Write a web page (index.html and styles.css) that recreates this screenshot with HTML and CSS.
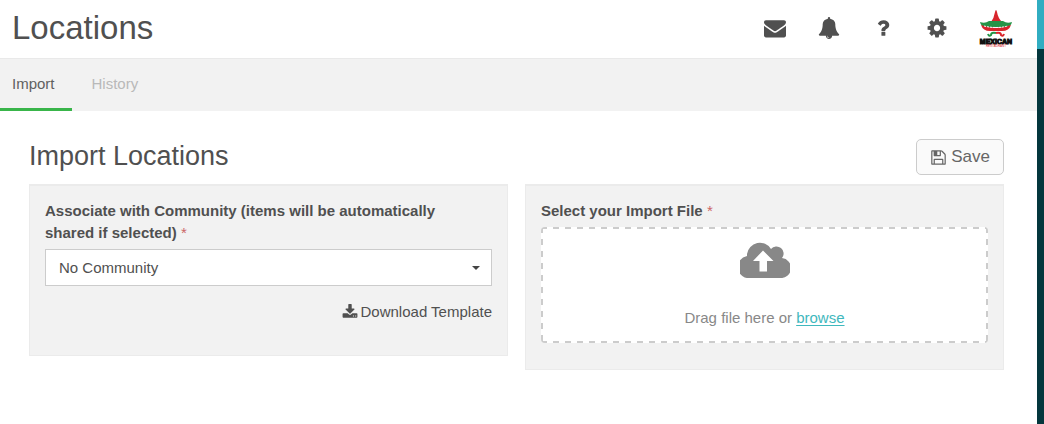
FILE: index.html
```html
<!DOCTYPE html>
<html lang="en">
  <head>
    <meta charset="UTF-8" />
    <meta name="viewport" content="width=device-width, initial-scale=1.0" />
    <title>Locations</title>
    <link rel="stylesheet" href="styles.css">
  </head>
  <body>
    <div class="page">
      <header class="topbar">
        <h1>Locations</h1>
        <nav class="topbar-nav">
          <a href="#" aria-label="Messages">
            <svg class="icon" viewBox="0 0 1792 1792"><path d="M1792 710v794q0 66-47 113t-113 47h-1472q-66 0-113-47t-47-113v-794q44 49 101 87 362 246 497 345 57 42 92.500 65.500t94.500 48 110 24.500h2q51 0 110-24.500t94.500-48 92.500-65.500q170-123 498-345 57-39 100-87zm0-294q0 79-49 151t-122 123q-376 261-468 325-10 7-42.500 30.500t-54 38-52 32.500-57.500 27-50 9h-2q-23 0-50-9t-57.500-27-52-32.500-54-38-42.500-30.500q-91-64-262-182.500t-205-142.500q-62-42-117-115.500t-55-136.500q0-78 41.500-130t118.500-52h1472q65 0 112.500 47t47.500 113z"/></svg>
          </a>
          <a href="#" aria-label="Notifications">
            <svg class="icon" viewBox="0 0 1792 1792"><path d="M912 1696q0-16-16-16-59 0-101.500-42.500t-42.500-101.500q0-16-16-16t-16 16q0 73 51.500 124.500t124.500 51.500q16 0 16-16zm816-288q0 52-38 90t-90 38h-448q0 106-75 181t-181 75-181-75-75-181h-448q-52 0-90-38t-38-90q50-42 91-88t85-119.500 74.500-158.500 50-206 19.500-260q0-152 117-282.500t307-158.500q-8-19-8-39 0-40 28-68t68-28 68 28 28 68q0 20-8 39 190 28 307 158.500t117 282.500q0 139 19.500 260t50 206 74.500 158.500 85 119.500 91 88z"/></svg>
          </a>
          <a href="#" aria-label="Help">
            <svg class="icon" viewBox="0 0 1792 1792"><path d="M1088 1256v240q0 16-12 28t-28 12h-240q-16 0-28-12t-12-28v-240q0-16 12-28t28-12h240q16 0 28 12t12 28zm316-600q0 54-15.500 101t-35 76.500-55 59.500-57.500 43.500-61 35.500q-41 23-68.500 65t-27.500 67q0 17-12 32.500t-28 15.500h-240q-15 0-25.500-18.500t-10.500-37.500v-45q0-83 65-156.500t143-108.500q59-27 84-56t25-76q0-42-46.500-74t-107.500-32q-65 0-108 29-35 25-107 115-13 16-31 16-12 0-25-8l-164-125q-13-10-15.500-25t5.500-28q160-266 464-266 80 0 161 31t146 83 106 127.500 41 158.500z"/></svg>
          </a>
          <a href="#" aria-label="Settings">
            <svg class="icon" viewBox="0 0 1792 1792"><path d="M1152 896q0-106-75-181t-181-75-181 75-75 181 75 181 181 75 181-75 75-181zm512-109v222q0 12-8 23t-20 13l-185 28q-19 54-39 91 35 50 107 138 10 12 10 25t-9 23q-27 37-99 108t-94 71q-12 0-26-9l-138-108q-44 23-91 38-16 136-29 186-7 28-36 28h-222q-14 0-24.500-8.500t-11.500-21.500l-28-184q-49-16-90-37l-141 107q-10 9-25 9-14 0-25-11-126-114-165-168-7-10-7-23 0-12 8-23 15-21 51-66.500t54-70.500q-27-50-41-99l-183-27q-13-2-21-12.500t-8-23.500v-222q0-12 8-23t19-13l186-28q14-46 39-92-40-57-107-138-10-12-10-24 0-10 9-23 26-36 98.500-107.500t94.500-71.500q13 0 26 10l138 107q44-23 91-38 16-136 29-186 7-28 36-28h222q14 0 24.500 8.500t11.500 21.500l28 184q49 16 90 37l142-107q9-9 24-9 13 0 25 10 129 119 165 170 7 8 7 22 0 12-8 23-15 21-51 66.500t-54 70.500q26 50 41 98l183 28q13 2 21 12.500t8 23.500z"/></svg>
          </a>
        </nav>
        <a href="#" class="account" aria-label="Mexican Restaurant">
          <svg class="logo" viewBox="0 0 40 40">
            <path fill="#d8252c" d="M14 14 Q17 10 18 4 Q19 0 20 4 Q21 10 25 14z"/>
            <path fill="#259447" d="M3 14 Q8 16 12 13 L26 13 Q30 16 35 14 Q34 19 29 19 H9 Q4 19 3 14z"/>
            <path fill="#d8252c" d="M4 17 Q12 20 19 20 T34 17 Q32 23 25 23 H13 Q6 23 4 17z"/>
            <path fill="none" stroke="#fff" stroke-dasharray="2 1" d="M7 18 Q19 21 31 18"/>
            <path fill="none" stroke="#259447" stroke-width="2" d="M19 25 Q14 24 14 27 Q12 29 11 26"/>
            <path fill="none" stroke="#d8252c" stroke-width="2" d="M19 25 Q24 24 24 27 Q26 29 27 26"/>
            <text class="logo-name" x="19" y="36" text-anchor="middle">MEXICAN</text>
            <text class="logo-sub" x="19" y="39" text-anchor="middle">RESTAURANT</text>
          </svg>
        </a>
      </header>

      <nav class="tabs">
        <a href="#" class="tab active">Import</a>
        <a href="#" class="tab">History</a>
      </nav>

      <main>
        <div class="heading">
          <h2>Import Locations</h2>
          <button type="button" class="save">
            <svg class="icon" viewBox="0 0 1792 1792"><path d="M512 1536h768v-384h-768v384zm896 0h128v-896q0-14-10-38.500t-20-34.500l-281-281q-10-10-34-20t-39-10v416q0 40-28 68t-68 28h-576q-40 0-68-28t-28-68v-416h-128v1280h128v-416q0-40 28-68t68-28h832q40 0 68 28t28 68v416zm-384-928v-320q0-13-9.500-22.500t-22.500-9.500h-192q-13 0-22.500 9.500t-9.500 22.500v320q0 13 9.500 22.500t22.500 9.500h192q13 0 22.500-9.500t9.500-22.500zm640 32v928q0 40-28 68t-68 28h-1344q-40 0-68-28t-28-68v-1344q0-40 28-68t68-28h928q40 0 88 20t76 48l280 280q28 28 48 76t20 88z"/></svg>
            Save
          </button>
        </div>

        <div class="panels">
          <section class="panel">
            <label for="community">Associate with Community (items will be automatically shared if selected) <span class="required">*</span></label>
            <div class="select">
              <select id="community">
                <option>No Community</option>
              </select>
            </div>
            <a href="#" class="download">
              <svg class="icon" viewBox="0 0 1792 1792"><path d="M1344 1344q0-26-19-45t-45-19-45 19-19 45 19 45 45 19 45-19 19-45zm256 0q0-26-19-45t-45-19-45 19-19 45 19 45 45 19 45-19 19-45zm128-224v320q0 40-28 68t-68 28h-1472q-40 0-68-28t-28-68v-320q0-40 28-68t68-28h465l135 136q58 56 136 56t136-56l136-136h464q40 0 68 28t28 68zm-325-569q17 41-14 70l-448 448q-18 19-45 19t-45-19l-448-448q-31-29-14-70 17-39 59-39h256v-448q0-26 19-45t45-19h256q26 0 45 19t19 45v448h256q42 0 59 39z"/></svg>
              Download Template
            </a>
          </section>

          <section class="panel upload">
            <h3>Select your Import File <span class="required">*</span></h3>
            <div class="dropzone">
              <svg class="cloud" viewBox="0 0 50 37">
                <path d="M11 37 A11 11 0 0 1 7 15 V13 A13 13 0 0 1 31 8 A7 7 0 0 1 42 17 A10 10 0 0 1 40 37z"/>
                <path fill="#fff" d="M23 9.500 L33.500 20 H27 V30.500 H19.500 V20 H13z"/>
              </svg>
              <p>Drag file here or <a href="#">browse</a></p>
            </div>
          </section>
        </div>
      </main>
    </div>
    <aside class="rail"></aside>
  </body>
</html>
```
FILE: styles.css
```css
* {
  box-sizing: border-box;
}

body {
  display: flex;
  min-height: 100vh;
  margin: 0;
  font-family: "Liberation Sans", Arial, sans-serif;
  font-size: 15px;
  line-height: 22px;
  color: #505050;
  background-color: #fff;
}

h1,
h2,
h3,
p {
  margin: 0;
}

a {
  color: inherit;
  text-decoration: none;
}

.icon {
  display: block;
  width: 16px;
  height: 16px;
  fill: currentColor;
}

.page {
  flex: 1;
}

.rail {
  width: 7px;
  background-color: #04373d;
  border-top: 49px solid #31adc1;
}

.topbar {
  display: flex;
  align-items: center;
  height: 58px;
  padding: 0 20px 2px 12px;
}

h1 {
  margin-right: auto;
  font-size: 33px;
  font-weight: normal;
  line-height: 40px;
}

.topbar-nav {
  display: flex;
  gap: 32px;
  margin-right: 29px;
}

.topbar-nav .icon {
  width: 22px;
  height: 22px;
}

.logo {
  display: block;
  width: 40px;
  height: 40px;
}

.logo-name {
  font-size: 7px;
  font-weight: bold;
  fill: #111;
  stroke: #111;
  stroke-width: 1px;
}

.logo-sub {
  font-size: 3px;
  fill: #d8252c;
}

.tabs {
  display: flex;
  height: 53px;
  background-color: #f2f2f2;
  border-top: 1px solid #e9e9e9;
}

.tab {
  padding: 14px 17px 0 12px;
  margin-right: 8px;
  color: #b9b9b9;
}

.tab.active {
  color: #606060;
  border-bottom: 3px solid #39b54a;
}

main {
  padding: 28px 33px 28px 29px;
}

.heading {
  display: flex;
  justify-content: space-between;
  height: 45px;
}

h2 {
  font-size: 27px;
  font-weight: normal;
  line-height: 34px;
}

.save {
  display: flex;
  align-items: center;
  gap: 4px;
  height: 36px;
  padding: 0 13px;
  font-family: inherit;
  font-size: 17px;
  color: #666;
  background-color: #fafafa;
  border: 1px solid #ccc;
  border-radius: 5px;
}

.save .icon {
  width: 17px;
  height: 17px;
}

.panels {
  display: grid;
  grid-template-columns: 1fr 1fr;
  gap: 17px;
  align-items: start;
}

.panel {
  padding: 14px 15px 32px;
  background-color: #f2f2f2;
  border: 1px solid #ebebeb;
  border-top-width: 2px;
}

.panel.upload {
  padding-bottom: 26px;
}

label,
h3 {
  display: block;
  padding-right: 15px;
  font-size: 15px;
  font-weight: bold;
  line-height: 22px;
}

.required {
  font-weight: normal;
  color: #cc6666;
}

.select {
  position: relative;
  margin-top: 5px;
}

.select::after {
  content: "";
  position: absolute;
  top: 17px;
  right: 12px;
  border: 4px solid transparent;
  border-top-color: #444;
  border-bottom: 0;
  pointer-events: none;
}

select {
  display: block;
  width: 100%;
  height: 37px;
  padding: 0 13px;
  font-family: inherit;
  font-size: 15px;
  color: #505050;
  background-color: #fff;
  border: 1px solid #ccc;
  border-radius: 0;
  appearance: none;
}

.download {
  display: flex;
  align-items: center;
  justify-content: flex-end;
  gap: 3px;
  margin-top: 15px;
}

.dropzone {
  --dash: #ccc 0 6px, transparent 6px 12px;
  display: flex;
  flex-direction: column;
  align-items: center;
  gap: 29px;
  height: 116px;
  margin-top: 5px;
  padding-top: 14px;
  color: #888;
  background:
    repeating-linear-gradient(90deg, var(--dash)) top / 100% 2px no-repeat,
    repeating-linear-gradient(90deg, var(--dash)) bottom / 100% 2px no-repeat,
    repeating-linear-gradient(var(--dash)) left / 2px 100% no-repeat,
    repeating-linear-gradient(var(--dash)) right / 2px 100% no-repeat,
    #fff;
  border-radius: 4px;
}

.cloud {
  width: 50px;
  height: 37px;
  fill: #888;
}

.dropzone a {
  color: #3fb8bd;
  text-decoration: underline;
  text-underline-offset: 2px;
}
```
